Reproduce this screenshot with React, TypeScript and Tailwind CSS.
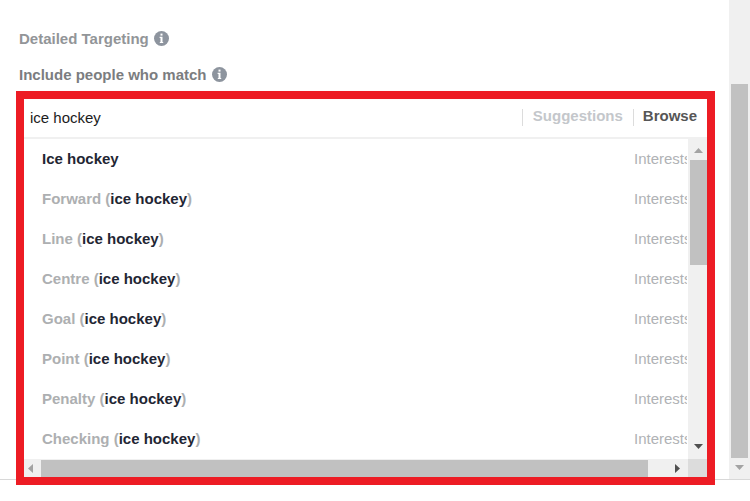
import { useState } from "react";

const results = [
  { prefix: "", match: "Ice hockey" },
  { prefix: "Forward", match: "ice hockey" },
  { prefix: "Line", match: "ice hockey" },
  { prefix: "Centre", match: "ice hockey" },
  { prefix: "Goal", match: "ice hockey" },
  { prefix: "Point", match: "ice hockey" },
  { prefix: "Penalty", match: "ice hockey" },
  { prefix: "Checking", match: "ice hockey" },
];

function InfoIcon() {
  return (
    <svg
      className="mb-0.5"
      width="15"
      height="15"
      viewBox="0 0 15 15"
      aria-hidden="true"
    >
      <circle cx="7.5" cy="7.5" r="7.5" fill="#8d949e" />
      <path d="M6.5 2.6h2v2h-2z" fill="#fff" />
      <path d="M5.6 5.8h2.9v5.3h.7v1H5.8v-1h.7V6.9h-.9z" fill="#fff" />
    </svg>
  );
}

function Arrow({ d, color }: { d: string; color: string }) {
  return (
    <svg width="9" height="9" viewBox="0 0 9 9" aria-hidden="true">
      <path d={d} fill={color} />
    </svg>
  );
}

const UP = "M0 7L4.5 2L9 7z";
const DOWN = "M0 2h9L4.5 7z";
const LEFT = "M7 0v9L2 4.5z";
const RIGHT = "M2 0v9L7 4.5z";

function ResultList() {
  return (
    <div className="flex">
      <ul className="min-w-0 flex-1">
        {results.map((item) => (
          <li key={item.prefix + item.match}>
            <button
              type="button"
              className="flex h-10 w-full items-center justify-between pr-px pl-[18px] text-left"
            >
              <span className="font-bold text-[#adafb1]">
                {item.prefix && `${item.prefix} (`}
                <span className="text-[#1f2633]">{item.match}</span>
                {item.prefix && ")"}
              </span>
              <span className="w-[53px] overflow-hidden whitespace-nowrap text-[#b0b2b5]">
                Interests
              </span>
            </button>
          </li>
        ))}
      </ul>
      <div className="flex w-[19px] flex-col bg-[#f0f0f0] pl-0.5">
        <button
          type="button"
          aria-label="Scroll up"
          className="flex h-[21px] items-center justify-center pt-0.5"
        >
          <Arrow d={UP} color="#a3a3a3" />
        </button>
        <div className="h-[105px] bg-[#c1c1c1]" />
        <button
          type="button"
          aria-label="Scroll down"
          className="mt-auto flex h-6 items-center justify-center pb-0.5"
        >
          <Arrow d={DOWN} color="#505050" />
        </button>
      </div>
    </div>
  );
}

function HorizontalScrollbar() {
  return (
    <div className="flex h-[18px] bg-[#f0f0f0]">
      <button
        type="button"
        aria-label="Scroll left"
        className="flex w-[17px] items-center justify-center pr-1"
      >
        <Arrow d={LEFT} color="#a3a3a3" />
      </button>
      <div className="mt-px mr-[19px] flex-1 bg-[#c1c1c1]" />
      <button
        type="button"
        aria-label="Scroll right"
        className="flex w-[21px] items-center justify-center"
      >
        <Arrow d={RIGHT} color="#505050" />
      </button>
      <div className="w-[19px] bg-[#dcdcdc]" />
    </div>
  );
}

function App() {
  const [query, setQuery] = useState("ice hockey");

  return (
    <div className="min-h-screen bg-white font-['Liberation_Sans',Arial,sans-serif] text-[15px] leading-5">
      <div className="flex border-b border-[#d8d8d8]">
        <main className="min-w-0 flex-1 pt-[29px] pr-[14px] pl-4">
          <h2 className="flex items-center gap-[5px] pl-[3px] font-bold text-[#929598]">
            Detailed Targeting
            <InfoIcon />
          </h2>
          <label
            htmlFor="targeting"
            className="mt-4 flex items-center gap-[5px] pl-[3px] font-bold text-[#7b7d80]"
          >
            Include people who match
            <InfoIcon />
          </label>
          <div className="relative mt-1.5 -mb-1.5 border-8 border-[#ed1c24] bg-white">
            <div className="flex h-10 items-start border-b-2 border-[#f0f0f0] pr-2.5">
              <input
                id="targeting"
                value={query}
                onChange={(e) => setQuery(e.target.value)}
                className="h-9 min-w-0 flex-1 pl-1.5 text-[#1c1c1c] outline-none"
              />
              <div className="mt-2.5 flex items-center font-bold">
                <button
                  type="button"
                  className="flex h-[17px] items-center border-l border-[#dcdcdc] px-[10px] pb-1 text-[#c4c7cb]"
                >
                  Suggestions
                </button>
                <button
                  type="button"
                  className="flex h-[17px] items-center border-l border-[#dcdcdc] pb-1 pl-[9px] text-[#565656]"
                >
                  Browse
                </button>
              </div>
            </div>
            <ResultList />
            <HorizontalScrollbar />
          </div>
        </main>
        <div className="flex w-[21px] flex-col bg-[#f0f0f0] px-0.5 pt-[84px]">
          <div className="flex-1 bg-[#c1c1c1]" />
          <button
            type="button"
            aria-label="Scroll page down"
            className="flex h-[21px] items-center justify-center pb-0.5"
          >
            <Arrow d={DOWN} color="#a3a3a3" />
          </button>
        </div>
      </div>
    </div>
  );
}

export default App;
